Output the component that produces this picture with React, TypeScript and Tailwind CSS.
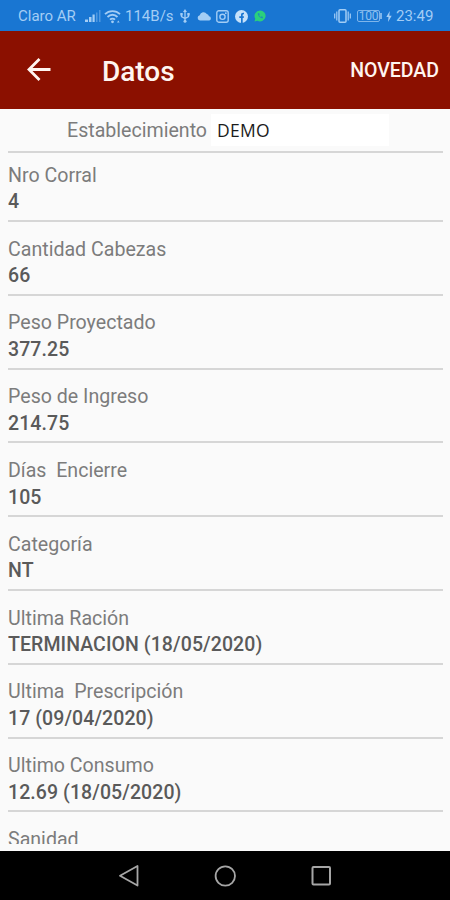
import { ReactNode } from "react";

interface Field {
  label: string;
  value: string;
}

const fields: Field[] = [
  { label: "Nro Corral", value: "4" },
  { label: "Cantidad Cabezas", value: "66" },
  { label: "Peso Proyectado", value: "377.25" },
  { label: "Peso de Ingreso", value: "214.75" },
  { label: "Días  Encierre", value: "105" },
  { label: "Categoría", value: "NT" },
  { label: "Ultima Ración", value: "TERMINACION (18/05/2020)" },
  { label: "Ultima  Prescripción", value: "17 (09/04/2020)" },
  { label: "Ultimo Consumo", value: "12.69 (18/05/2020)" },
];

function Icon({ className, viewBox, children }: { className: string; viewBox: string; children: ReactNode }) {
  return (
    <svg className={`shrink-0 ${className}`} viewBox={viewBox} fill="none" aria-hidden="true">
      {children}
    </svg>
  );
}

function StatusBar() {
  return (
    <div className="flex h-[31px] shrink-0 items-center bg-[#1976d2] pl-[18px] pr-[17px] pt-px text-[15px] leading-none text-[#a3cdf5]">
      <span className="w-[67px] whitespace-nowrap">Claro AR</span>
      {/* signal */}
      <Icon className="h-[14px] w-[16px]" viewBox="0 0 16 14">
        <path d="M0 13v-2.500h3V13zM4 13V8h2.500v5z" fill="currentColor" />
        <path d="M7.500 13V5.500h2.200V13z" fill="currentColor" />
        <path d="M11 13V3.500h1.500V13zM14 13V1h1.500v12z" fill="currentColor" opacity=".4" />
      </Icon>
      {/* wifi */}
      <Icon className="ml-[3px] h-[15px] w-[17px]" viewBox="0 0 17 15">
        <path d="M1 5.200C5 1 12 1 16 5.200M3.500 8c3-3 7-3 10 0M6 10.700c1.500-1.500 3.500-1.500 5 0" stroke="currentColor" strokeWidth="1.800" />
        <circle cx="8.500" cy="12.800" r="1.400" fill="currentColor" />
        <path d="M13 13.500l1.300-2 1.300 2z" fill="currentColor" />
      </Icon>
      <span className="ml-[4px] w-[49px] whitespace-nowrap">114B/s</span>
      {/* usb */}
      <Icon className="ml-[6px] h-[14px] w-[10px]" viewBox="0 0 10 14">
        <path d="M5 2v10M1.500 5v2.500L5 9.500l3.500-2V5" stroke="currentColor" strokeWidth="1.300" />
        <path d="M5 0l2 3H3zM.300 4h2.400v2.400H.300zM7.300 4h2.400v2.400H7.300z" fill="currentColor" />
        <circle cx="5" cy="12.300" r="1.500" fill="currentColor" />
      </Icon>
      {/* cloud */}
      <Icon className="ml-[7px] h-[10px] w-[15px]" viewBox="0 0 15 10">
        <path d="M3 9.500a2.700 2.700 0 0 1-.300-5.300A4 4 0 0 1 9.800 3a3.300 3.300 0 0 1 2.200 2.200 2.200 2.200 0 0 1 .300 4.300z" fill="currentColor" />
      </Icon>
      {/* instagram */}
      <Icon className="ml-[4px] h-[13px] w-[13px]" viewBox="0 0 13 13">
        <rect x=".800" y=".800" width="11.400" height="11.400" rx="2" stroke="currentColor" strokeWidth="1.400" />
        <circle cx="6.500" cy="6.800" r="2.600" stroke="currentColor" strokeWidth="1.400" />
        <circle cx="9.800" cy="3.200" r=".900" fill="currentColor" />
      </Icon>
      {/* facebook */}
      <Icon className="ml-[6px] h-[13px] w-[13px]" viewBox="0 0 13 13">
        <circle cx="6.500" cy="6.500" r="6.500" fill="#c5e1fa" />
        <path d="M6 13V8H4.300V6.200H6V4.800C6 3.200 7 2.500 9 2.800v1.500c-1 0-1.300.100-1.300.900v1H9L8.700 8h-1v5z" fill="#1976d2" />
      </Icon>
      {/* whatsapp */}
      <Icon className="ml-[6px] h-[12px] w-[12px]" viewBox="0 0 12 12">
        <path d="M6 .500a5.500 5.500 0 1 1-2.600 10.300L.500 11.500l.800-2.700A5.500 5.500 0 0 1 6 .500z" fill="#2bd07c" />
        <path d="M3.700 3.500c.300 2.600 2 4.400 4.800 4.900l.500-1.300-1.400-.800-.800.600C5.900 6.400 5.500 5.900 5.200 5.200l.500-.700-.600-1.400z" fill="#1c8fb8" />
      </Icon>
      <div className="ml-auto flex items-center">
        {/* vibrate */}
        <Icon className="h-[14px] w-[17px]" viewBox="0 0 17 14">
          <rect x="5" y=".800" width="7" height="12.400" rx="1" stroke="currentColor" strokeWidth="1.500" />
          <path d="M2.800 2.500v9M14.200 2.500v9M.700 4.500v5M16.300 4.500v5" stroke="currentColor" strokeWidth="1.200" />
        </Icon>
        <span className="ml-[6px] flex h-[12px] w-[23px] items-center justify-center rounded-[2px] border border-[#7fb5ea] text-[12px] leading-none tracking-[-0.3px] text-[#8fc0ef]">
          100
        </span>
        <span className="h-[6px] w-[2px] bg-[#7fb5ea]" />
        {/* charging */}
        <Icon className="ml-[4px] h-[11px] w-[6px]" viewBox="0 0 6 11">
          <path d="M3.800 0L.300 6h2.200L2 11l3.700-6.300H3.300z" fill="currentColor" />
        </Icon>
        <span className="ml-[4px] w-[37px] whitespace-nowrap">23:49</span>
      </div>
    </div>
  );
}

function AppBar() {
  return (
    <header className="flex h-[78px] shrink-0 items-center bg-[#8b1000] pl-[27px] pr-[11px] text-[#fff5f0]">
      <Icon className="h-[24px] w-[24px]" viewBox="0 0 24 24">
        <path d="M23.500 11.500H2M12.500 1L2 11.500 12.500 22" stroke="currentColor" strokeWidth="2.800" />
      </Icon>
      <h1 className="ml-[51px] pt-[3px] text-[28px] font-medium leading-none">Datos</h1>
      <button className="ml-auto pt-[2px] text-[19.500px] font-medium leading-none">NOVEDAD</button>
    </header>
  );
}

function FieldRow({ label, value }: Field) {
  return (
    <div className="flex h-[73.8px] shrink-0 flex-col justify-end border-b-2 border-[#d6d6d6] pb-[4.200px] first:h-[69px]">
      <span className="whitespace-pre text-[19.600px] leading-[26.500px] text-[#7c7c7c]">{label}</span>
      <span className="text-[19.500px] font-medium leading-[26.500px] tracking-[0.08px] text-[#5a5a5a]">{value}</span>
    </div>
  );
}

function NavBar() {
  return (
    <nav className="flex h-[49px] shrink-0 items-center justify-center gap-[74px] bg-black text-[#a6a6a6]">
      <Icon className="h-[22px] w-[22px]" viewBox="0 0 22 22">
        <path d="M19.500 1v19.500L2 10.700z" stroke="currentColor" strokeWidth="1.800" strokeLinejoin="round" />
      </Icon>
      <Icon className="h-[22px] w-[22px]" viewBox="0 0 22 22">
        <circle cx="11.300" cy="11" r="9.700" stroke="currentColor" strokeWidth="1.800" />
      </Icon>
      <Icon className="h-[22px] w-[22px]" viewBox="0 0 22 22">
        <rect x="2.500" y="2" width="17.500" height="17.500" rx="1" stroke="currentColor" strokeWidth="2" />
      </Icon>
    </nav>
  );
}

export default function App() {
  return (
    <div className="flex h-[900px] w-[450px] flex-col overflow-hidden bg-[#fafafa] font-['Roboto',sans-serif]">
      <StatusBar />
      <AppBar />
      <main className="flex min-h-0 flex-1 flex-col pb-[7px] pl-[8px] pr-[7px]">
        <div className="flex h-[44px] shrink-0 items-center border-b-2 border-[#d6d6d6] pl-[59px]">
          <span className="pt-[2px] text-[19.600px] leading-none text-[#7c7c7c]">Establecimiento</span>
          <span className="ml-[4px] flex h-[32px] w-[178px] items-center bg-white pl-[6px] pt-[2px] font-['Open_Sans',sans-serif] text-[17.500px] leading-none tracking-[0.3px] text-[#1c1c1c]">
            DEMO
          </span>
        </div>
        <div className="flex min-h-0 flex-1 flex-col overflow-hidden">
          {fields.map((field) => (
            <FieldRow key={field.label} {...field} />
          ))}
          <span className="mt-[14.500px] shrink-0 text-[19.600px] leading-[26.500px] text-[#7c7c7c]">Sanidad</span>
        </div>
      </main>
      <NavBar />
    </div>
  );
}
